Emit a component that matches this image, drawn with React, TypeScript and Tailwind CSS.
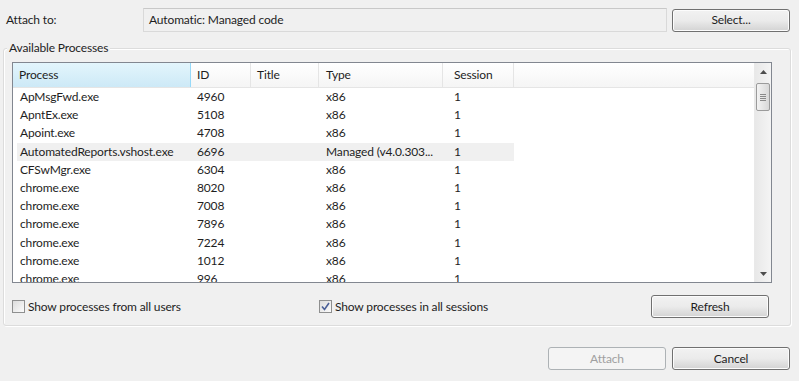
import React from 'react';

const rows: { name: string; id: string; type: string; hot?: boolean }[] = [
  { name: 'ApMsgFwd.exe', id: '4960', type: 'x86' },
  { name: 'ApntEx.exe', id: '5108', type: 'x86' },
  { name: 'Apoint.exe', id: '4708', type: 'x86' },
  { name: 'AutomatedReports.vshost.exe', id: '6696', type: 'Managed (v4.0.303...', hot: true },
  { name: 'CFSwMgr.exe', id: '6304', type: 'x86' },
  { name: 'chrome.exe', id: '8020', type: 'x86' },
  { name: 'chrome.exe', id: '7008', type: 'x86' },
  { name: 'chrome.exe', id: '7896', type: 'x86' },
  { name: 'chrome.exe', id: '7224', type: 'x86' },
  { name: 'chrome.exe', id: '1012', type: 'x86' },
  { name: 'chrome.exe', id: '996', type: 'x86' },
];

const font = "font-['Segoe_UI','Lato',sans-serif]";

const WinButton: React.FC<{ label: string; disabled?: boolean; className?: string }> = ({ label, disabled, className }) => (
  <button
    disabled={disabled}
    className={`h-[23px] w-[118px] rounded-[3px] border text-[12px] ${
      disabled
        ? 'border-[#adb2b5] bg-[#f4f4f4] text-[#a0a0a0]'
        : 'border-[#707070] bg-gradient-to-b from-[#f2f2f2] via-[#ebebeb] to-[#d3d3d3] text-[#1e1e1e] shadow-[inset_0_0_0_1px_#fcfcfc]'
    } ${className ?? ''}`}
  >
    {label}
  </button>
);

const Checkbox: React.FC<{ checked?: boolean; label: string }> = ({ checked, label }) => (
  <label className="flex items-center gap-[3px]">
    <span className="flex h-[13px] w-[13px] items-center justify-center border border-[#8e8f8f] bg-gradient-to-br from-[#dcdcdc] to-[#fbfbfb]">
      {checked && (
        <svg width="9" height="9" viewBox="0 0 9 9">
          <path d="M1 4.5 L3.5 7.5 L8 1" fill="none" stroke="#4a5f97" strokeWidth="1.6" />
        </svg>
      )}
    </span>
    <span>{label}</span>
  </label>
);

export default function App() {
  return (
    <div className={`relative h-[381px] w-[799px] overflow-hidden bg-[#f0f0f0] text-[12px] tracking-[-0.15px] text-[#1e1e1e] ${font}`}>
      {/* Attach to row */}
      <div className="flex items-center pt-[8px]">
        <div className="w-[143px] pl-[6px]">Attach to:</div>
        <div className="flex h-[24px] w-[524px] items-center border border-[#d9d9d9] border-t-[#c8c8c8] bg-[#f0f0f0] pl-[5px]">
          Automatic: Managed code
        </div>
        <WinButton label="Select..." className="ml-[5px]" />
      </div>

      {/* Group box */}
      <div className="relative ml-[3px] mt-[16px] h-[278px] w-[788px] rounded-[3px] border border-[#dcdcdc] shadow-[inset_1px_1px_0_#ffffff,1px_1px_0_#ffffff]">
        <div className="absolute left-[3px] top-[-9px] bg-[#f0f0f0] px-[2px] leading-[16px]">Available Processes</div>

        {/* List view */}
        <div className="ml-[8px] mt-[13px] flex h-[221px] w-[760px] border border-[#828790] bg-white">
          <div className="flex-1 overflow-hidden">
            <div className="flex h-[25px] border-b border-[#e5e5e5] bg-gradient-to-b from-white to-[#f5f5f5]">
              <div className="flex w-[178px] items-center border-r border-[#96d9f9] bg-gradient-to-b from-[#e3f5fc] to-[#cde9f7] pl-[6px]">Process</div>
              <div className="flex w-[60px] items-center border-r border-[#e5e5e5] pl-[6px]">ID</div>
              <div className="flex w-[68px] items-center border-r border-[#e5e5e5] pl-[6px]">Title</div>
              <div className="flex w-[124px] items-center border-r border-[#e5e5e5] pl-[7px]">Type</div>
              <div className="flex w-[71px] items-center border-r border-[#e5e5e5] pl-[11px]">Session</div>
            </div>
            {rows.map((r, i) => (
              <div key={i} className={`ml-[4px] flex h-[18.2px] w-[497px] items-center ${r.hot ? 'bg-[#f0f0f0]' : ''}`}>
                <div className="w-[174px] pl-[3px]">{r.name}</div>
                <div className="w-[60px] pl-[6px]">{r.id}</div>
                <div className="w-[68px]" />
                <div className="w-[124px] pl-[7px]">{r.type}</div>
                <div className="w-[71px] pl-[11px]">1</div>
              </div>
            ))}
          </div>

          {/* Scrollbar */}
          <div className="flex w-[17px] flex-col border-l border-[#e9e9e9] bg-gradient-to-r from-[#e8e8e8] to-[#f4f4f4]">
            <div className="flex h-[17px] items-center justify-center">
              <svg width="7" height="4" viewBox="0 0 7 4">
                <path d="M0 4 L3.5 0 L7 4 Z" fill="#4d4d4d" />
              </svg>
            </div>
            <div className="mx-[1px] mt-[3px] flex h-[28px] items-center justify-center rounded-[2px] border border-[#9b9b9b] bg-gradient-to-r from-[#f3f3f3] to-[#d8d8d8]">
              <div className="flex flex-col gap-[1px]">
                <div className="h-[1px] w-[6px] bg-[#8a8a8a]" />
                <div className="h-[1px] w-[6px] bg-[#8a8a8a]" />
                <div className="h-[1px] w-[6px] bg-[#8a8a8a]" />
                <div className="h-[1px] w-[6px] bg-[#8a8a8a]" />
              </div>
            </div>
            <div className="flex-1" />
            <div className="flex h-[17px] items-center justify-center">
              <svg width="7" height="4" viewBox="0 0 7 4">
                <path d="M0 0 L3.5 4 L7 0 Z" fill="#4d4d4d" />
              </svg>
            </div>
          </div>
        </div>

        {/* Options row */}
        <div className="ml-[8px] mt-[12px] flex items-center">
          <div className="w-[307px]">
            <Checkbox label="Show processes from all users" />
          </div>
          <div className="w-[332px]">
            <Checkbox checked label="Show processes in all sessions" />
          </div>
          <WinButton label="Refresh" />
        </div>
      </div>

      {/* Bottom buttons */}
      <div className="mt-[21px] flex justify-end gap-[6px] pr-[9px]">
        <WinButton label="Attach" disabled />
        <WinButton label="Cancel" />
      </div>
    </div>
  );
}
